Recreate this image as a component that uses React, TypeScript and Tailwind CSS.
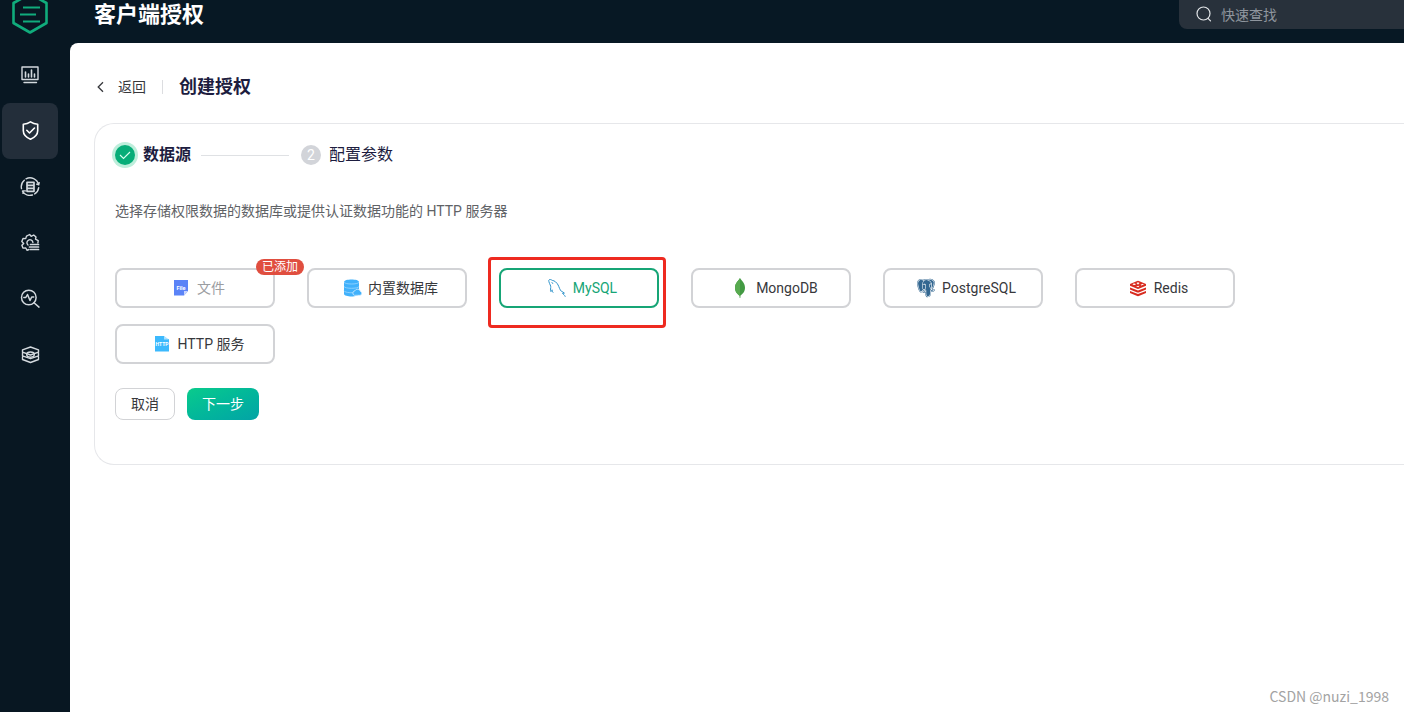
import type { ReactNode } from 'react';
import { BiLogoPostgresql } from 'react-icons/bi';

function Logo() {
  return (
    <svg viewBox="0 0 38 42" className="h-[42px] w-[38px]" fill="none" stroke="#10ac7c" strokeWidth="2.6" strokeLinejoin="round" aria-hidden="true">
      <path d="M19 2 35.500 11v20L19 40.500 2.500 31V11Z" />
      <path d="M12 15.500h17M9 22.500h16M12 29.500h17" strokeWidth="2.200" />
    </svg>
  );
}

const iconProps = {
  viewBox: '0 0 20 20',
  className: 'size-5',
  fill: 'none',
  stroke: 'currentColor',
  strokeWidth: 1.4,
  strokeLinejoin: 'round' as const,
  strokeLinecap: 'round' as const,
  'aria-hidden': true,
};

const navItems: { label: string; icon: ReactNode }[] = [
  {
    label: '监控',
    icon: (
      <svg {...iconProps}>
        <path d="M2 2h16v12.500H2ZM4 17.500h12.500" />
        <path d="M5.500 12V7M8.500 12V9M11.500 12V5M14.500 12V9" strokeWidth="1.600" />
      </svg>
    ),
  },
  {
    label: '访问控制',
    icon: (
      <svg {...iconProps} strokeWidth={1.6}>
        <path d="M10.500 .8c2.300 1.700 4.700 2.300 7.200 2.400v6.500c0 4-3.100 6.700-7.200 8.500-4.100-1.800-7.200-4.500-7.200-8.500V3.200C5.800 3.100 8.200 2.500 10.500.8Z" />
        <path d="m6.800 9.300 2.700 2.700 5-5" />
      </svg>
    ),
  },
  {
    label: '集成',
    icon: (
      <svg {...iconProps}>
        <path d="M6 1.800A8.700 8.700 0 0 1 18.500 7.600M18.700 10.600a8.700 8.700 0 0 1-4 6.300M12.500 18A8.700 8.700 0 0 1 2.500 14.100M1.500 11.600A8.700 8.700 0 0 1 4.300 3.200M16.700 7.100l2 .8.500-2.200M3 16.400v-2.500h2.500" />
        <path d="M7 5.300h7v9H7ZM7 8.300h7M7 11.300h7" strokeWidth="1.700" />
      </svg>
    ),
  },
  {
    label: '管理',
    icon: (
      <svg {...iconProps}>
        <path d="M7 17.300 5.800 15l-2.900.1L1.900 12.200l1.800-1.800-1.900-1.900L3 5.500l2.700.1L6.500 3.100 9.600 1.500l1.600 1.800 2.500-1.300 2.300 2-.5 2.200 2.700 1.400-.3 2.400M7 17.300l2-.8" />
        <path d="M8 12A3 3 0 1 1 12.900 9.500" />
        <path d="M10.500 11.500h8M9.500 14h9M10.500 16.500h8" strokeWidth="1.700" />
      </svg>
    ),
  },
  {
    label: '问题分析',
    icon: (
      <svg {...iconProps} strokeWidth={1.5}>
        <circle cx="8.800" cy="8.500" r="7.300" />
        <path d="m14 13.800 5 4.300M3.800 8.500h2L7.500 5.500l2.500 6 1.700-3.500h2" />
      </svg>
    ),
  },
  {
    label: '系统设置',
    icon: (
      <svg {...iconProps}>
        <path d="m10.500 2 8 2.800v2.400l-8 2.800-8-2.800V4.800ZM2.500 8.300v2.500l8 2.900 8-2.900V8.300M2.500 12v2.500l8 3 8-3V12" />
        <ellipse cx="10.500" cy="9.600" rx="3.800" ry="2.600" />
      </svg>
    ),
  },
];

function FileIcon() {
  return (
    <svg viewBox="0 0 16 18" className="h-[18px] w-4" aria-hidden="true">
      <path d="M1 1h14v11l-4 4.500H1Z" fill="#5b83f7" />
      <path d="M15 12h-4v4.500Z" fill="#c9d5fd" />
      <text x="8" y="10.500" fontSize="5.500" fontWeight="700" textAnchor="middle" fill="#fff" fontFamily="Roboto, sans-serif">File</text>
    </svg>
  );
}

function DatabaseIcon() {
  return (
    <svg viewBox="0 0 20 20" className="size-5" aria-hidden="true">
      <path d="M2 4c0-3.300 15-3.300 15 0v12c0 3.300-15 3.300-15 0Z" fill="#41b1fb" />
      <path d="M2 4.200c1 2.400 14 2.400 15 0M2 8.500c1 2.400 14 2.400 15 0M2 12.800c1 2 9 2.300 11 1.500" fill="none" stroke="#9bd6ff" strokeWidth=".8" />
      <path d="M12.500 17.300a2.300 2.300 0 0 1 .4-4.500 3 3 0 0 1 5.600.7 2 2 0 0 1-.4 3.800Z" fill="#41b1fb" stroke="#d4edff" strokeWidth=".8" />
    </svg>
  );
}

function MysqlIcon() {
  return (
    <svg viewBox="0 0 20 20" className="size-5" fill="none" stroke="#2f94cb" strokeWidth="1" strokeLinejoin="round" strokeLinecap="round" aria-hidden="true">
      <path d="M6 14.500c-.7-.4-.6-1.800-.9-2.700-.7 1-.7 2-1.300 1.700-.8-.8.2-4-.1-5.300C3.400 7 1.500 4 1.800 2.200c.6-1.400 2.500-.5 3.500.2 2.200.2 4.500 2.100 5.800 4.600 1.100 2 1.600 4.800 3.300 6.300.8.600 2.300.8 3 1.800l-1.900.3c.7 1 2.200 1.500 2.700 3" />
      <path d="m5 4.500.7 1" />
    </svg>
  );
}

function MongoIcon() {
  return (
    <svg viewBox="0 0 20 20" className="size-5" aria-hidden="true">
      <path d="M10 0C11.500 2.500 15 5 15 9.800c0 4.200-2.600 6.500-4.500 7.700L10.300 20h-.6l-.3-2.500C7.500 16.300 5 14 5 9.800 5 5 8.700 2.500 10 0Z" fill="#439a43" />
      <path d="M10 0C8.700 2.500 5 5 5 9.800c0 4.200 2.500 6.500 4.400 7.700L10 18Z" fill="#58aa50" />
    </svg>
  );
}

function RedisIcon() {
  return (
    <svg viewBox="0 0 18 18" className="size-[18px]" aria-hidden="true">
      <g fill="#d82c20">
        <path d="m1 12 8 3 8-3v2L9.800 17q-.8.300-1.600 0L1 14Z" />
        <path d="m1 8.400 8 3 8-3v2l-7.200 3q-.8.300-1.600 0L1 10.400Z" />
        <path d="M1 4.900 8.200 2q.8-.3 1.600 0L17 4.900v1.800L9.800 9.800q-.8.300-1.600 0L1 6.700Z" />
      </g>
      <path d="m9 2.800.5 1 1.300.1-1 .7.200.9-1-.4-1 .4.200-.9-1-.7 1.300-.1ZM11.500 5.700l2.500-1 .8.700-2.500 1Z" fill="#fff" />
      <ellipse cx="5.200" cy="5.200" rx="1.600" ry=".7" fill="#fff" />
      <path d="m7 7.200 3.500-.5-1.200 1.500Z" fill="#fff" />
    </svg>
  );
}

function HttpIcon() {
  return (
    <svg viewBox="0 0 16 18" className="h-[18px] w-4" aria-hidden="true">
      <path d="M1 1h9l1.500 3H15v12.500H1Z" fill="#3cb9fd" />
      <path d="M10 1v3.500h5Z" fill="#a9e0ff" />
      <text x="8" y="11" fontSize="5" fontWeight="700" textAnchor="middle" fill="#fff" fontFamily="Roboto, sans-serif">HTTP</text>
    </svg>
  );
}

type Source = { name: string; icon: ReactNode; added?: boolean; selected?: boolean };

const sources: Source[] = [
  { name: '文件', icon: <FileIcon />, added: true },
  { name: '内置数据库', icon: <DatabaseIcon /> },
  { name: 'MySQL', icon: <MysqlIcon />, selected: true },
  { name: 'MongoDB', icon: <MongoIcon /> },
  { name: 'PostgreSQL', icon: <BiLogoPostgresql className="size-[22px] shrink-0 text-[#336791]" aria-hidden="true" /> },
  { name: 'Redis', icon: <RedisIcon /> },
  { name: 'HTTP 服务', icon: <HttpIcon /> },
];

function SourceOption({ name, icon, added, selected }: Source) {
  const tone = selected
    ? 'border-[#16a576] text-[#16a576]'
    : added
      ? 'border-[#d2d3d6] text-[#9b9da1]'
      : 'border-[#d2d3d6] text-[#37383c]';
  return (
    <div className="relative">
      <button
        type="button"
        disabled={added}
        aria-pressed={!!selected}
        className={`flex h-10 w-40 items-center justify-center gap-1.5 rounded-lg border-2 bg-white pl-1.5 text-sm ${tone}`}
      >
        <span className="flex size-5 items-center justify-center">{icon}</span>
        <span>{name}</span>
      </button>
      {added && (
        <span className="absolute -top-[9px] -right-[29px] h-4 w-12 rounded-full bg-[#e04e3f] text-center text-xs leading-4 text-white">
          已添加
        </span>
      )}
      {selected && (
        <span className="pointer-events-none absolute -top-[11px] -right-[7px] -bottom-5 -left-[11px] rounded-sm border-3 border-[#ee2a20]" />
      )}
    </div>
  );
}

export default function App() {
  return (
    <div className="flex min-h-screen overflow-hidden bg-[#071824] font-[Roboto,'Noto_Sans_CJK_SC',sans-serif] text-[#37383c]">
      <aside className="w-[70px] shrink-0 bg-[#081722]">
        <a href="#home" aria-label="首页" className="-mt-2 flex h-[55px] w-[60px] justify-center">
          <Logo />
        </a>
        <nav className="flex flex-col pl-[2px]">
          {navItems.map((item, i) => (
            <a
              key={item.label}
              href={`#nav-${i}`}
              aria-label={item.label}
              className={`flex size-14 items-center justify-center rounded-lg ${i === 1 ? 'bg-[#232e3a] text-white' : 'text-[#d3d9de]'}`}
            >
              {item.icon}
            </a>
          ))}
        </nav>
      </aside>

      <div className="flex min-w-0 flex-1 flex-col">
        <header className="flex h-[43px] items-start justify-between pl-6">
          <h1 className="text-[22px] leading-[30px] font-bold text-white">客户端授权</h1>
          <label className="flex h-[29px] w-[225px] items-center gap-2 rounded-bl-lg bg-[#28313b] pl-4">
            <svg viewBox="0 0 18 18" className="size-[18px] shrink-0" fill="none" stroke="#e2e5e8" strokeWidth="1.200" strokeLinecap="round" aria-hidden="true">
              <circle cx="8.500" cy="7.500" r="6.500" />
              <path d="m13 12.300 2.500 2.500" />
            </svg>
            <input
              type="text"
              aria-label="快速查找"
              placeholder="快速查找"
              className="w-full min-w-0 bg-transparent text-sm text-white outline-none placeholder:text-[#8f969e]"
            />
          </label>
        </header>

        <main className="relative flex-1 rounded-tl-lg bg-white pt-8 pl-6">
          <div className="flex h-6 items-center">
            <a href="#back" className="flex items-center gap-3 text-sm">
              <svg viewBox="0 0 12 12" className="size-3" fill="none" stroke="currentColor" strokeWidth="1.300" aria-hidden="true">
                <path d="M9 1.200 4.200 6 9 10.800" />
              </svg>
              返回
            </a>
            <span className="mx-4 h-[14px] w-px bg-[#dcdde0]" />
            <h2 className="text-lg leading-6 font-bold text-[#1d1d3f]">创建授权</h2>
          </div>

          <section className="mt-6 rounded-l-[20px] border border-r-0 border-[#e6e7ea] px-5 pt-[19px] pb-11">
            <ol className="flex h-6 items-center text-base leading-6 text-[#1d1d3f]">
              <li className="flex items-center gap-2 font-bold">
                <span className="flex size-5 items-center justify-center rounded-full bg-[#07ad78] ring-3 ring-[#bdeedb]">
                  <svg viewBox="0 0 14 14" className="size-[14px]" fill="none" stroke="#d9fff0" strokeWidth="1.100" aria-hidden="true">
                    <path d="m2 7 3.500 3.500L12 4" />
                  </svg>
                </span>
                数据源
              </li>
              <li aria-hidden="true" className="mr-3 ml-[10px] h-px w-[88px] bg-[#dfe1e4]" />
              <li className="flex items-center gap-2">
                <span className="flex size-5 items-center justify-center rounded-full bg-[#d2d4d9] text-sm leading-5 text-white">2</span>
                配置参数
              </li>
            </ol>

            <p className="mt-8 text-sm leading-6 text-[#606266]">选择存储权限数据的数据库或提供认证数据功能的 HTTP 服务器</p>

            <div className="mt-[45px] flex flex-wrap gap-x-8 gap-y-4">
              {sources.map((source) => (
                <SourceOption key={source.name} {...source} />
              ))}
            </div>

            <div className="mt-6 flex gap-3 text-sm">
              <button type="button" className="h-8 w-[60px] rounded-lg border border-[#d2d3d6] bg-white">取消</button>
              <button type="button" className="h-8 w-[72px] rounded-lg bg-linear-to-br from-[#0bcb8b] to-[#04a3a6] text-white">下一步</button>
            </div>
          </section>

          <span className="absolute right-[15px] bottom-[6px] font-['Noto_Sans_CJK_SC',sans-serif] text-sm leading-5 text-[#a3a3a3]">
            CSDN @nuzi_1998
          </span>
        </main>
      </div>
    </div>
  );
}
